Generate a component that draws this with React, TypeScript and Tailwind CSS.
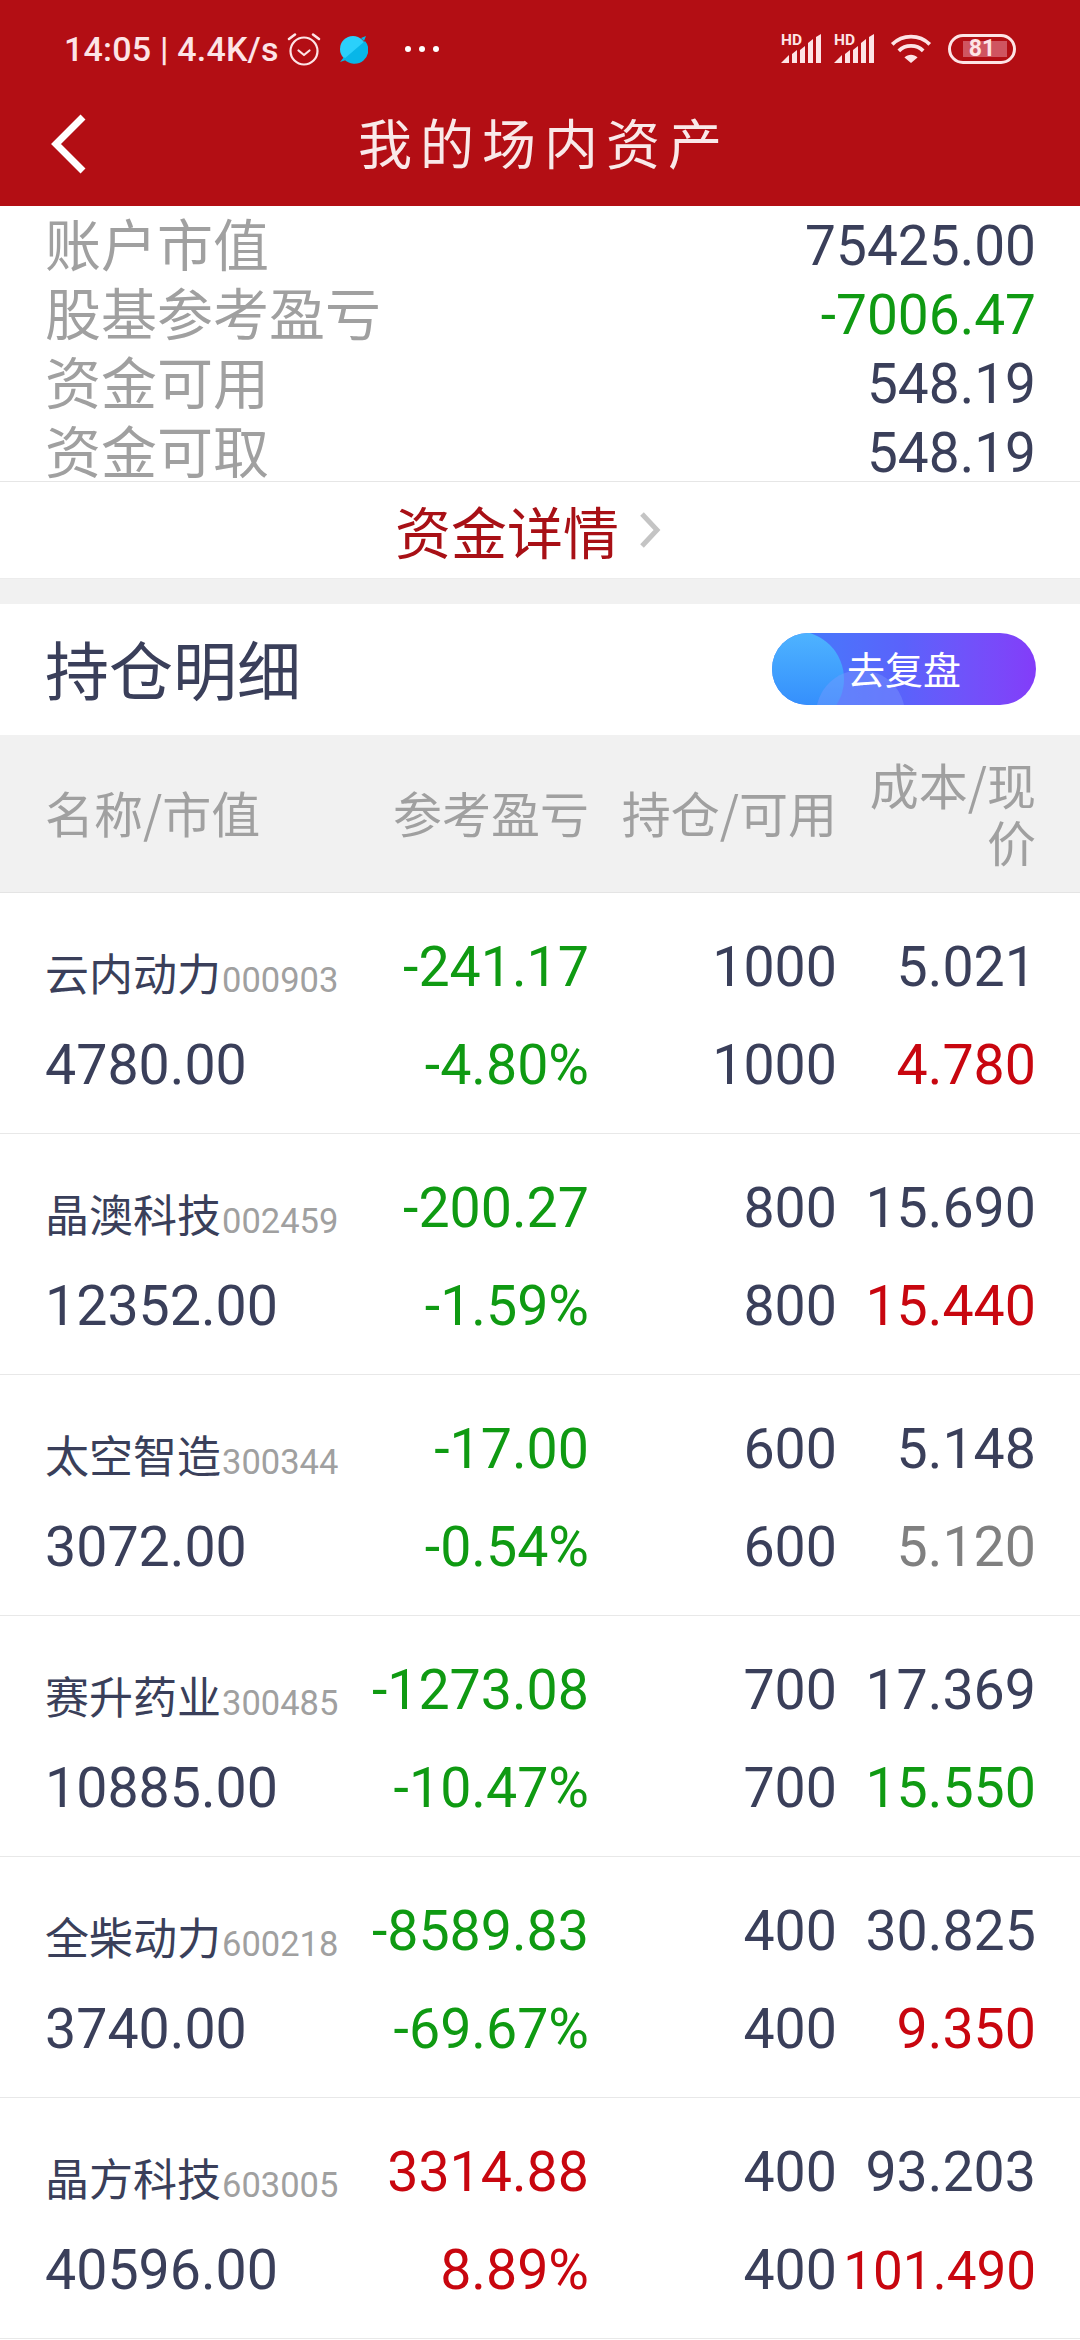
const NUM = "font-['Roboto','Noto_Sans_CJK_SC',sans-serif]";

const rows = [
  { name: "云内动力", code: "000903", value: "4780.00", pl: "-241.17", pct: "-4.80%", plc: "text-[#0f9a12]", hold: "1000", cost: "5.021", now: "4.780", nc: "text-[#c8060f]" },
  { name: "晶澳科技", code: "002459", value: "12352.00", pl: "-200.27", pct: "-1.59%", plc: "text-[#0f9a12]", hold: "800", cost: "15.690", now: "15.440", nc: "text-[#c8060f]" },
  { name: "太空智造", code: "300344", value: "3072.00", pl: "-17.00", pct: "-0.54%", plc: "text-[#0f9a12]", hold: "600", cost: "5.148", now: "5.120", nc: "text-[#808080]" },
  { name: "赛升药业", code: "300485", value: "10885.00", pl: "-1273.08", pct: "-10.47%", plc: "text-[#0f9a12]", hold: "700", cost: "17.369", now: "15.550", nc: "text-[#0f9a12]" },
  { name: "全柴动力", code: "600218", value: "3740.00", pl: "-8589.83", pct: "-69.67%", plc: "text-[#0f9a12]", hold: "400", cost: "30.825", now: "9.350", nc: "text-[#c8060f]" },
  { name: "晶方科技", code: "603005", value: "40596.00", pl: "3314.88", pct: "8.89%", plc: "text-[#c8060f]", hold: "400", cost: "93.203", now: "101.490", nc: "text-[#c8060f]" },
];

const summary = [
  { label: "账户市值", value: "75425.00", cls: "text-[#3a3f5a]" },
  { label: "股基参考盈亏", value: "-7006.47", cls: "text-[#0f9a12]" },
  { label: "资金可用", value: "548.19", cls: "text-[#3a3f5a]" },
  { label: "资金可取", value: "548.19", cls: "text-[#3a3f5a]" },
];

function Signal() {
  return (
    <svg className="overflow-visible" width="40" height="30" viewBox="0 0 40 30" fill="#fde4e6">
      <text x="0" y="11" fontSize="15.5" fontWeight="700" fontFamily="Roboto, sans-serif">HD</text>
      <path d="M0 29 L8 21 V29 Z" />
      <path d="M11 29 V20 L16 16 V29 Z" />
      <path d="M19 29 V16 L24 12 V29 Z" />
      <path d="M27 29 V9 L32 5 V29 Z" />
      <path d="M35 29 V3 L40 0 V29 Z" />
    </svg>
  );
}

export default function App() {
  return (
    <div className={`w-[1080px] min-h-[2340px] bg-white font-['Noto_Sans_CJK_SC','Roboto',sans-serif]`}>
      <div className="h-[206px] bg-[#b30e14]">
        <div className="h-[97px] flex items-center pl-[64px] pr-[64px] text-[#fde4e6]">
          <span className={`${NUM} text-[34px] font-medium leading-none tracking-[0.2px]`}>14:05 | 4.4K/s</span>
          <svg className="ml-[7px]" width="36" height="36" viewBox="0 0 36 36" fill="none" stroke="#fde4e6" strokeWidth="2.2" strokeLinecap="round" strokeLinejoin="round">
            <circle cx="18" cy="20" r="13.5" />
            <path d="M12.5 19.5 L18 24 L23.5 19.5" />
            <path d="M3 8 L9 3.5 M33 8 L27 3.5" strokeWidth="2.6" />
          </svg>
          <svg className="ml-[16px]" width="30" height="30" viewBox="0 0 30 30">
            <circle cx="15" cy="15" r="13" fill="#2bd0fb" />
            <path d="M27 7 A13 13 0 0 1 6 25 Z" fill="#08b6e8" />
            <path d="M2 28 L6 23 L8 26 Z M28 2 L23 4 L26 7 Z" fill="#08b6e8" />
          </svg>
          <div className="ml-[37px] flex gap-[8px]">
            <span className="w-[6px] h-[6px] rounded-full bg-white" />
            <span className="w-[6px] h-[6px] rounded-full bg-white" />
            <span className="w-[6px] h-[6px] rounded-full bg-white" />
          </div>
          <div className="ml-auto flex items-center">
            <Signal />
            <div className="ml-[13px]"><Signal /></div>
            <svg className="ml-[16px]" width="42" height="30" viewBox="0 0 44 32" fill="none" stroke="#fde4e6" strokeWidth="4">
              <path d="M2 11 C13 0 31 0 42 11" />
              <path d="M9 18 C16 11 28 11 35 18" />
              <path d="M22 31 L15 25 C19 21 25 21 29 25 Z" fill="#fde4e6" stroke="none" />
            </svg>
            <div className="ml-[16px] relative w-[68px] h-[30px] rounded-full border-[3px] border-[#fde4e6] overflow-hidden">
              <div className="absolute left-[12px] top-[4px] bottom-[4px] w-[44px] bg-[#cf5560]" />
              <span className={`absolute inset-0 flex items-center justify-center ${NUM} text-[23px] font-bold text-[#fde4e6] leading-none`}>81</span>
            </div>
          </div>
        </div>
        <div className="h-[109px] relative flex items-center justify-center pb-[16px]">
          <svg className="absolute left-[50px] top-[17px]" width="36" height="60" viewBox="0 0 36 60" fill="none" stroke="#ffffff" strokeWidth="7">
            <path d="M33 3 L6 30 L33 57" />
          </svg>
          <span className="text-[54px] leading-none tracking-[8px] text-[#f9e9e9] ml-[8px] mb-[3px]">我的场内资产</span>
        </div>
      </div>

      <div className="h-[276px] border-b border-[#e6e6e6] pl-[45px] pr-[44px] flex flex-col pt-[1px]">
        {summary.map((s) => (
          <div key={s.label} className="h-[69px] shrink-0 flex items-center justify-between">
            <span className="text-[56px] leading-none text-[#a0a0a0]">{s.label}</span>
            <span className={`${NUM} text-[55px] leading-none mt-[10px] ${s.cls}`}>{s.value}</span>
          </div>
        ))}
      </div>

      <div className="h-[97px] flex items-center justify-center border-b border-[#ececec] pr-[24px]">
        <span className="text-[56px] leading-none text-[#a81016]">资金详情</span>
        <svg className="ml-[20px]" width="22" height="38" viewBox="0 0 22 38" fill="none" stroke="#c4c4c4" strokeWidth="5">
          <path d="M3 3 L18 19 L3 35" />
        </svg>
      </div>

      <div className="h-[25px] bg-[#f1f1f1]" />

      <div className="h-[131px] flex items-center justify-between pl-[45px] pr-[44px]">
        <span className="text-[64px] leading-none text-[#3a3f5a] mb-[6px]">持仓明细</span>
        <div className="relative w-[264px] h-[72px] mb-[2px] rounded-full overflow-hidden bg-gradient-to-r from-[#3a80fb] via-[#5a62fb] to-[#833cf9] flex items-center justify-center">
          <div className="absolute left-[-24px] top-[-2px] w-[96px] h-[96px] rounded-full bg-gradient-to-b from-[#4fb4ff] to-[#2f84fb]" />
          <div className="absolute left-[44px] top-[37px] w-[89px] h-[89px] rounded-full bg-[#7f9bff] opacity-40" />
          <span className="relative text-[38px] leading-none text-white mb-[2px]">去复盘</span>
        </div>
      </div>

      <div className="h-[158px] bg-[#f1f1f1] border-b border-[#e4e4e4] grid grid-cols-[321px_223px_248px_199px] items-center px-[45px] pb-[4px] text-[49px] leading-[57px] text-[#a0a0a0]">
        <span>名称/市值</span>
        <span className="text-right whitespace-nowrap">参考盈亏</span>
        <span className="text-right whitespace-nowrap">持仓/可用</span>
        <span className="text-right">成本/现价</span>
      </div>

      {rows.map((r) => (
        <div key={r.code} className="h-[241px] border-b border-[#e8e8e8] px-[45px] pt-[8px] grid grid-cols-[321px_223px_248px_199px] grid-rows-[98px_98px] content-center">
          <div className="flex items-end pb-[23px] leading-none">
            <span className="text-[44px] leading-none text-[#3a3f5a]">{r.name}</span>
            <span className={`${NUM} text-[34.5px] leading-none text-[#a0a0a0] ml-[1px] mb-[-3px]`}>{r.code}</span>
          </div>
          <div className={`${NUM} text-right text-[55.5px] leading-[98px] ${r.plc}`}>{r.pl}</div>
          <div className={`${NUM} text-right text-[55.5px] leading-[98px] text-[#3a3f5a]`}>{r.hold}</div>
          <div className={`${NUM} text-right text-[55.5px] leading-[98px] text-[#3a3f5a]`}>{r.cost}</div>
          <div className={`${NUM} text-[55.5px] leading-[98px] text-[#3a3f5a]`}>{r.value}</div>
          <div className={`${NUM} text-right text-[55.5px] leading-[98px] ${r.plc}`}>{r.pct}</div>
          <div className={`${NUM} text-right text-[55.5px] leading-[98px] text-[#3a3f5a]`}>{r.hold}</div>
          <div className={`${NUM} text-right ${r.now.length > 6 ? "text-[53px]" : "text-[55.5px]"} leading-[98px] ${r.nc}`}>{r.now}</div>
        </div>
      ))}
    </div>
  );
}
